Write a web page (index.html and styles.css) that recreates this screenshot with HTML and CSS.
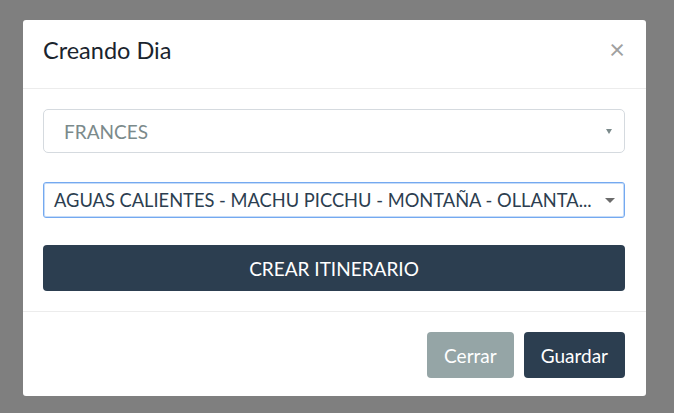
FILE: index.html
```html
<!DOCTYPE html>
<html lang="es">
<head>
<meta charset="utf-8">
<title>Creando Dia</title>
<link rel="stylesheet" href="styles.css">
</head>
<body>
<div class="modal">
  <div class="modal-header">
    <h4 class="modal-title">Creando Dia</h4>
    <span class="close">&times;</span>
  </div>
  <div class="modal-body">
    <div class="select select-lg">
      <span class="select-text">FRANCES</span>
      <span class="caret-small"></span>
    </div>
    <div class="select select-native">
      <span class="select-text">AGUAS CALIENTES - MACHU PICCHU - MONTAÑA - OLLANTA...</span>
      <span class="caret-native"></span>
    </div>
    <button class="btn btn-primary btn-block">CREAR ITINERARIO</button>
  </div>
  <div class="modal-footer">
    <button class="btn btn-default">Cerrar</button>
    <button class="btn btn-primary">Guardar</button>
  </div>
</div>
</body>
</html>
```
FILE: styles.css
```css
html, body {
  margin: 0;
  padding: 0;
}
body {
  background: #7f7f7f;
  font-family: Lato, "Noto Sans", sans-serif;
  height: 413px;
  overflow: hidden;
  padding: 20px 0 0 23px;
  box-sizing: border-box;
}
.modal {
  width: 623px;
  background: #fff;
  border-radius: 3px;
  box-sizing: border-box;
}
.modal-header {
  height: 69px;
  box-sizing: border-box;
  border-bottom: 1px solid #ececec;
  padding: 0 20px 8px 20px;
  display: flex;
  align-items: center;
  justify-content: space-between;
}
.modal-title {
  margin: 0;
  font-weight: 400;
  font-size: 23.5px;
  color: #1a242e;
}
.close {
  font-size: 27px;
  color: #a0a0a0;
  line-height: 1;
  margin-right: 1px;
  margin-top: -4px;
}
.modal-body {
  padding: 20px;
  display: flex;
  flex-direction: column;
}
.select {
  position: relative;
  box-sizing: border-box;
  display: flex;
  align-items: center;
  width: 582px;
}
.select-lg {
  height: 44px;
  border: 1px solid #d5dadf;
  border-radius: 5px;
  padding-left: 20px;
  font-size: 19px;
  color: #7b8a8b;
}
.select-native {
  margin-top: 29px;
  height: 36px;
  border: 1px solid #74a9f0;
  border-radius: 3px;
  box-shadow: inset 0 0 0 1px #c6dcf8;
  padding-left: 10px;
  font-size: 18.3px;
  color: #2c3e50;
}
.select-text {
  white-space: nowrap;
}
.caret-small {
  position: absolute;
  right: 12px;
  top: 19px;
  width: 0;
  height: 0;
  border-left: 3px solid transparent;
  border-right: 3px solid transparent;
  border-top: 5px solid #7b8a8b;
}
.caret-native {
  position: absolute;
  right: 9px;
  top: 15px;
  width: 0;
  height: 0;
  border-left: 5px solid transparent;
  border-right: 5px solid transparent;
  border-top: 5px solid #6b6b6b;
}
.btn {
  font-family: Lato, "Noto Sans", sans-serif;
  font-size: 19px;
  border: none;
  border-radius: 4px;
  color: #fff;
  height: 46px;
  padding: 0 17px;
  cursor: pointer;
}
.btn-primary {
  background: #2c3e50;
}
.btn-default {
  background: #95a5a6;
}
.btn-block {
  margin-top: 27px;
  width: 582px;
}
.modal-footer {
  border-top: 1px solid #ececec;
  padding: 20px 21px 18px 20px;
  display: flex;
  justify-content: flex-end;
  gap: 10px;
}
```
